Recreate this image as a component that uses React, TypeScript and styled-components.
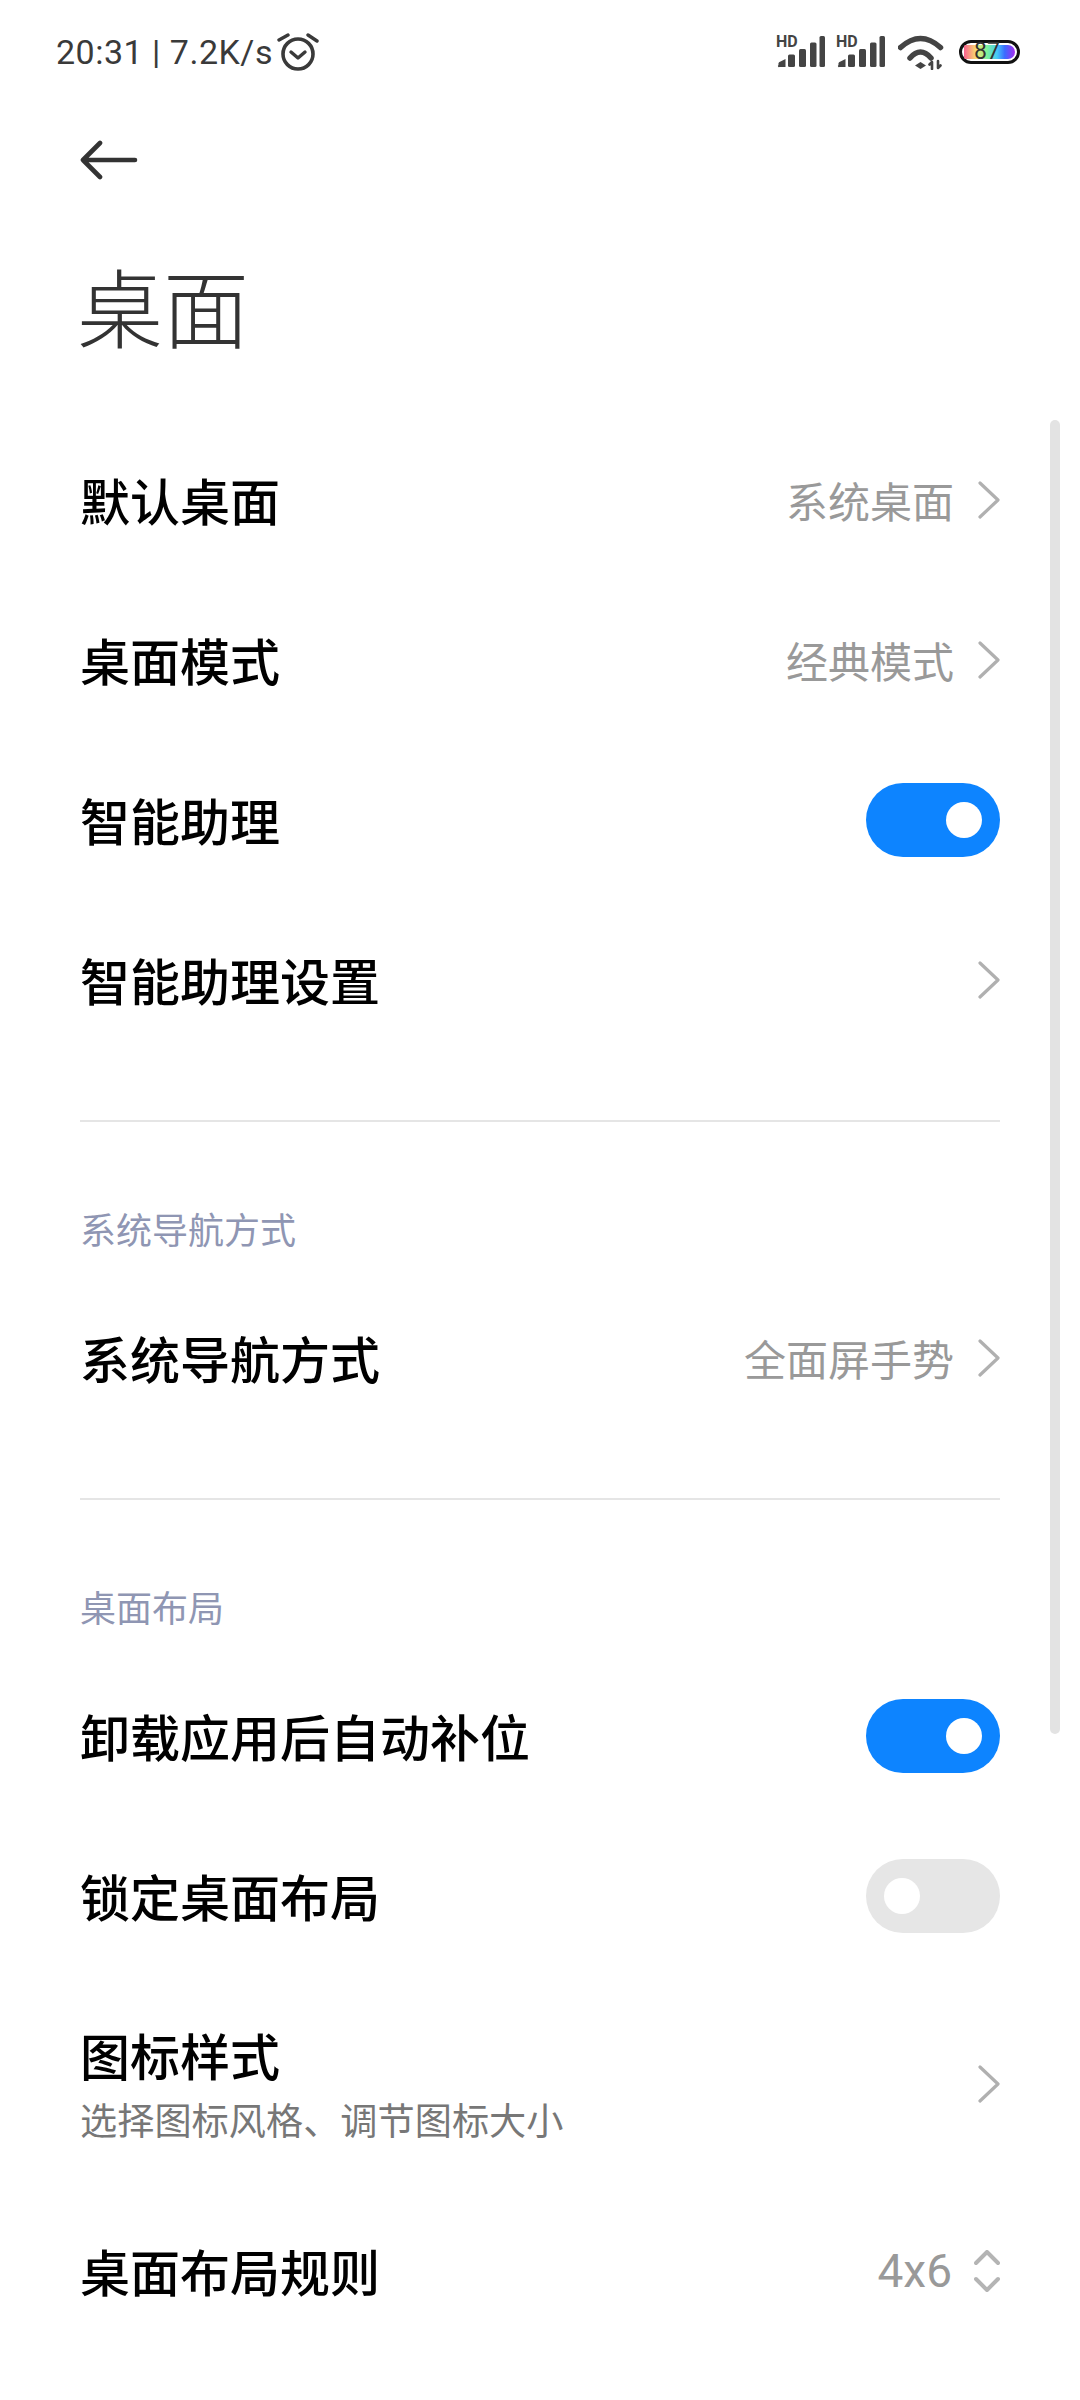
import React from "react";
import styled, { createGlobalStyle } from "styled-components";

const GlobalStyle = createGlobalStyle`
  html, body {
    margin: 0;
    padding: 0;
    background: #fff;
    font-family: "Noto Sans CJK SC", "Noto Sans", sans-serif;
  }
`;

const Page = styled.div`
  position: relative;
  width: 1080px;
  height: 2400px;
  overflow: hidden;
  background: #fff;
`;

const StatusBar = styled.div`
  height: 104px;
  padding: 0 60px 0 56px;
  box-sizing: border-box;
  display: flex;
  align-items: center;
  justify-content: space-between;
  color: #3a3a3a;
`;

const StatusLeft = styled.div`
  display: flex;
  align-items: center;
  gap: 4px;
  font-family: Roboto, sans-serif;
  font-size: 34px;
  letter-spacing: 0.5px;
`;

const StatusRight = styled.div`
  display: flex;
  align-items: center;
  gap: 11px;
`;

const SignalWrap = styled.div`
  position: relative;
  width: 49px;
  height: 32px;
`;

const HdLabel = styled.span`
  position: absolute;
  top: -1px;
  left: 0;
  font-family: Roboto, sans-serif;
  font-size: 16px;
  font-weight: 700;
  line-height: 14px;
  color: #444;
`;

const BatteryShell = styled.div`
  width: 61px;
  height: 24px;
  box-sizing: border-box;
  border: 3px solid #111;
  border-radius: 12px;
  padding: 2px;
  margin-left: 3px;
`;

const BatteryFill = styled.div`
  height: 100%;
  box-sizing: border-box;
  border-radius: 2px 8px 8px 2px;
  background: linear-gradient(90deg, #f9618f 0%, #f8e36d 25%, #7df39b 45%, #45c8f8 65%, #3b6bff 80%, #a52cf0 100%);
  font-family: Roboto, sans-serif;
  font-size: 23px;
  line-height: 14px;
  color: #333;
  padding-left: 10px;
`;

const BackBar = styled.div`
  height: 112px;
  padding-left: 80px;
  display: flex;
  align-items: center;
`;

const PageTitle = styled.h1`
  margin: 0;
  height: 204px;
  padding: 0 0 28px 77px;
  display: flex;
  align-items: center;
  font-size: 86px;
  font-weight: 300;
  color: #333;
  box-sizing: border-box;
`;

const Row = styled.div<{ $tall?: boolean }>`
  height: ${(p) => (p.$tall ? 215 : 160)}px;
  padding: 0 80px;
  display: flex;
  align-items: center;
  justify-content: space-between;
`;

const RowText = styled.div`
  display: flex;
  flex-direction: column;
`;

const RowTitle = styled.div`
  font-size: 50px;
  font-weight: 500;
  line-height: 62px;
  padding-bottom: 2px;
  color: #000;
`;

const RowSub = styled.div`
  font-size: 37.2px;
  line-height: 50px;
  margin-top: 7px;
  color: #777;
`;

const RowValue = styled.div`
  display: flex;
  align-items: center;
  gap: 24px;
  font-size: 42px;
  line-height: 60px;
  color: #999;
`;

const NumberValue = styled.span`
  font-family: Roboto, sans-serif;
  font-size: 46px;
  margin-right: -2px;
`;

const Switch = styled.div<{ $on?: boolean }>`
  width: 134px;
  height: 74px;
  box-sizing: border-box;
  border-radius: 37px;
  padding: 0 18px;
  display: flex;
  align-items: center;
  justify-content: ${(p) => (p.$on ? "flex-end" : "flex-start")};
  background: ${(p) => (p.$on ? "#0d84ff" : "#e6e6e6")};
`;

const Knob = styled.div`
  width: 36px;
  height: 36px;
  border-radius: 50%;
  background: #fff;
`;

const Divider = styled.hr`
  margin: 60px 80px 0;
  height: 2px;
  border: 0;
  background: #e5e5e5;
`;

const SectionLabel = styled.div`
  height: 156px;
  box-sizing: border-box;
  padding: 0 80px 25px;
  display: flex;
  align-items: flex-end;
  font-size: 36px;
  line-height: 50px;
  color: #8f96b3;
`;

const ScrollThumb = styled.div`
  position: absolute;
  top: 420px;
  right: 20px;
  width: 10px;
  height: 1314px;
  border-radius: 5px;
  background: #e3e3e3;
`;

const Chevron = () => (
  <svg width="22" height="38" viewBox="0 0 22 38" fill="none">
    <path d="M2 2l18 17L2 36" stroke="#b0b0b0" strokeWidth="3.2" strokeLinecap="round" strokeLinejoin="round" />
  </svg>
);

const UpDown = () => (
  <svg width="26" height="42" viewBox="0 0 26 42" fill="none">
    <path d="M2 13L13 2l11 11M2 29l11 11 11-11" stroke="#b4b4b4" strokeWidth="4" strokeLinecap="round" strokeLinejoin="round" />
  </svg>
);

const BackArrow = () => (
  <svg width="58" height="40" viewBox="0 0 58 40" fill="none">
    <path d="M55 20H3M20 3L3 20l17 17" stroke="#333" strokeWidth="4.6" strokeLinecap="round" strokeLinejoin="round" />
  </svg>
);

const AlarmIcon = () => (
  <svg width="42" height="40" viewBox="0 0 42 40" fill="none" stroke="#3a3a3a" strokeLinecap="round" strokeLinejoin="round">
    <circle cx="21" cy="22" r="15" strokeWidth="3.6" />
    <path d="M14 20l7 6 7-6" strokeWidth="3.4" />
    <path d="M2 8l9-5M31 3l9 6" strokeWidth="3.4" />
  </svg>
);

const SignalIcon = () => (
  <SignalWrap>
    <HdLabel>HD</HdLabel>
    <svg width="49" height="32" viewBox="0 0 49 32" fill="#444">
      <path d="M2.5 29a3 3 0 0 1 2-3.5l5-2.5v8h-6a1 1 0 0 1-1-2z" />
      <rect x="12" y="18.500" width="7" height="12.500" rx="1.500" />
      <rect x="23" y="13" width="7" height="18" rx="1.500" />
      <rect x="34" y="6.500" width="6.500" height="24.500" rx="1.500" />
      <rect x="43.500" y="0" width="5.500" height="31" rx="1.500" />
    </svg>
  </SignalWrap>
);

const WifiSvg = styled.svg`
  margin-left: 2px;
`;

const WifiIcon = () => (
  <WifiSvg width="47" height="35" viewBox="0 0 47 35" fill="none">
    <path d="M2.500 12.500Q22.500 -5.500 42.500 12.500" stroke="#444" strokeWidth="5.500" strokeLinecap="round" />
    <path d="M12 23Q22.500 11 33 23" stroke="#444" strokeWidth="5.500" strokeLinecap="round" />
    <path d="M17 30.500l5.500-3.500 5.500 3.500-5.500 3.500z" fill="#444" />
    <path d="M34 34v-7l-2.500 2.500M40 26v7l2.500-2.500" stroke="#444" strokeWidth="2.600" strokeLinecap="round" strokeLinejoin="round" />
  </WifiSvg>
);

export default function App() {
  return (
    <Page>
      <GlobalStyle />
      <StatusBar>
        <StatusLeft>
          <span>20:31 | 7.2K/s</span>
          <AlarmIcon />
        </StatusLeft>
        <StatusRight>
          <SignalIcon />
          <SignalIcon />
          <WifiIcon />
          <BatteryShell>
            <BatteryFill>87</BatteryFill>
          </BatteryShell>
        </StatusRight>
      </StatusBar>
      <BackBar>
        <BackArrow />
      </BackBar>
      <PageTitle>桌面</PageTitle>

      <Row>
        <RowTitle>默认桌面</RowTitle>
        <RowValue>系统桌面<Chevron /></RowValue>
      </Row>
      <Row>
        <RowTitle>桌面模式</RowTitle>
        <RowValue>经典模式<Chevron /></RowValue>
      </Row>
      <Row>
        <RowTitle>智能助理</RowTitle>
        <Switch $on><Knob /></Switch>
      </Row>
      <Row>
        <RowTitle>智能助理设置</RowTitle>
        <RowValue><Chevron /></RowValue>
      </Row>
      <Divider />

      <SectionLabel>系统导航方式</SectionLabel>
      <Row>
        <RowTitle>系统导航方式</RowTitle>
        <RowValue>全面屏手势<Chevron /></RowValue>
      </Row>
      <Divider />

      <SectionLabel>桌面布局</SectionLabel>
      <Row>
        <RowTitle>卸载应用后自动补位</RowTitle>
        <Switch $on><Knob /></Switch>
      </Row>
      <Row>
        <RowTitle>锁定桌面布局</RowTitle>
        <Switch><Knob /></Switch>
      </Row>
      <Row $tall>
        <RowText>
          <RowTitle>图标样式</RowTitle>
          <RowSub>选择图标风格、调节图标大小</RowSub>
        </RowText>
        <RowValue><Chevron /></RowValue>
      </Row>
      <Row>
        <RowTitle>桌面布局规则</RowTitle>
        <RowValue>
          <NumberValue>4x6</NumberValue>
          <UpDown />
        </RowValue>
      </Row>
      <ScrollThumb />
    </Page>
  );
}
